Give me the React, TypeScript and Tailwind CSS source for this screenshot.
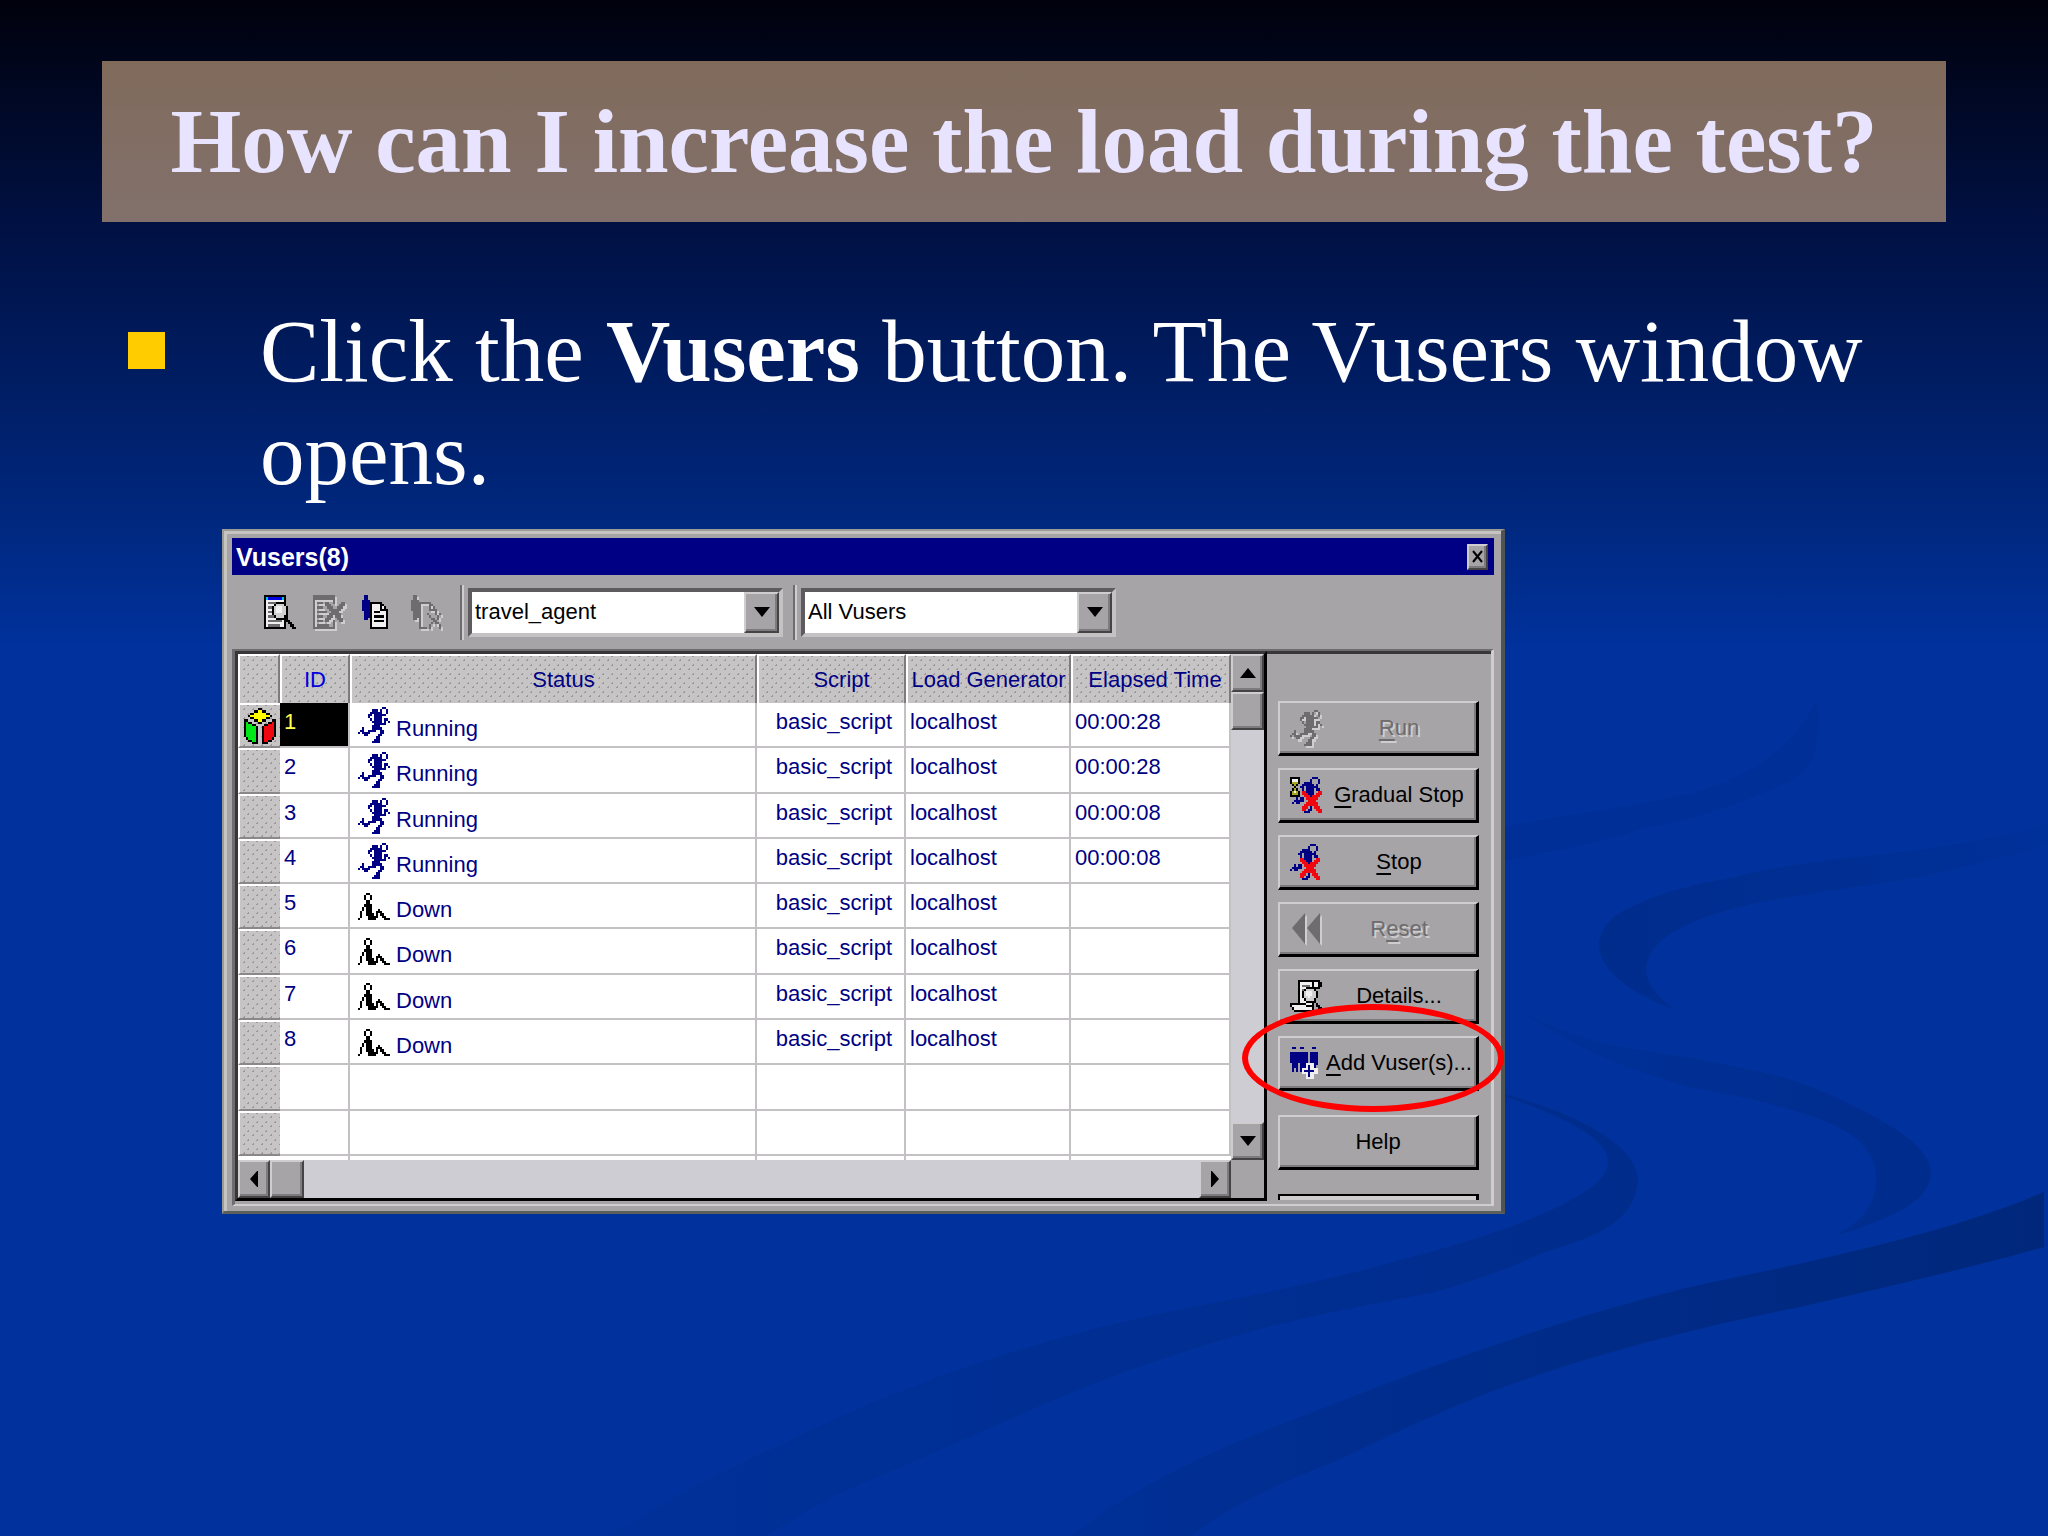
import type { ReactNode } from 'react';

const UI_FONT = "font-['Liberation_Sans',sans-serif] text-[22px] leading-[30px]";

const DOTS =
  'bg-[#c6c4c5] bg-[radial-gradient(circle,#9a9899_1px,transparent_1px),radial-gradient(circle,#9a9899_1px,transparent_1px)] bg-[size:9px_9px] bg-[position:0_0,4px_5px]';

const RAISED =
  'border-2 border-t-[#cfcdce] border-l-[#cfcdce] border-r-[#454344] border-b-[#454344] bg-[#a6a4a6] shadow-[inset_-2px_-2px_0_#7d7b7d]';

const PALETTE: Record<string, string> = {
  K: '#000000',
  W: '#f0f0f0',
  w: '#d0d0d0',
  g: '#6e6c6e',
  n: '#000084',
  b: '#0000e0',
  c: '#00c8e8',
  y: '#ffff00',
  o: '#a8a820',
  r: '#f00810',
  v: '#00e818',
};

const RUNNER = [
  '............nn..',
  '.......nnn.n..n.',
  '......nnnnnn..n.',
  '.....nn.nnnnnn..',
  '.....n..nnnn....',
  '......n.nnnn.nn.',
  '.......nnnnn.n.n',
  '........nnnnnn..',
  '.......nnnn.....',
  '..n....nnnnn....',
  '.nn..nnnn..nn...',
  'n.nnnn.....nn...',
  '...nn.....nn....',
  '.........nn.....',
  '........nnn.....',
  '.......nnnn.....',
];

const SITTING = [
  '....KK..........',
  '...K..K.........',
  '...K..K.........',
  '....KK..........',
  '....KK..........',
  '...KKKK.........',
  '..K.KKK.........',
  '..K.KKK...K.....',
  '.K..KKK..KKK....',
  '.K..KKKK.K.KK...',
  '.K...KKKKK..KK..',
  'K....KKKK....KKK',
];

const CUBE = [
  '.......KK.......',
  '.....KKyyKK.....',
  '...KKyyyyyyKK...',
  '..KyyyyyyyyyyK..',
  '...KKyyyyyyKK...',
  'KK...KKyyKK...KK',
  'KvKK...KK...KKrK',
  'KvvvKK....KKrrrK',
  'KvvvvvK..KrrrrrK',
  'KvvvvvK..KrrrrrK',
  'KvvvvvK..KrrrrrK',
  'KvvvvvK..KrrrrrK',
  'KvvvvvK..KrrrrrK',
  '.KvvvvK..KrrrrK.',
  '..KKvvK..KrrKK..',
  '....KKK..KKK....',
];

const FIND = [
  'KKKKKKKKKKK.....',
  'KcbbbbbbbcK.....',
  'KWWWWWWWWWK.....',
  'KWggggKKKKK.....',
  'KWWWWKwwwwK.....',
  'KWggKwWWWwwK....',
  'KWWWKwWWWwwK....',
  'KWggKwWWWwwK....',
  'KWWWKwwwwwwK....',
  'KWgggKwwwwKK....',
  'KWWWWWKKKKKK....',
  'KWgggggggWKKK...',
  'KWWWWWWWWWK.KK..',
  'KWggggggWWK..KK.',
  'KKKKKKKKKKK...KK',
];

const REMOVE = [
  'ggggggggggg.....',
  'ggggggggggg.....',
  'g.........g.....',
  'g.ggg.gg..g...gg',
  'g.....ggg....ggg',
  'g.ggg..ggg..ggg.',
  'g.......gggggg..',
  'g.ggggg..gggg...',
  'g.......gggggg..',
  'g.ggg..ggg.ggg..',
  'g.....ggg...ggg.',
  'g.ggg.gg..g..gg.',
  'g.........g.....',
  'g.gggggg..g.....',
  'ggggggggggg.....',
];

const USER_DOC = [
  '.nn.............',
  '.nn.............',
  'nnnn............',
  'nnnnKKKKKK......',
  'nnnnKWWWWKK.....',
  'nnnnKWWWWKWK....',
  'nnnnKWWWWKKKK...',
  '.nnnKWKKKWWWK...',
  '.nnnKWWWWWWWK...',
  '.nnnKWKKKKKWK...',
  '.nn.KWWWWWWWK...',
  '....KWKKKKKWK...',
  '....KWWWWWWWK...',
  '....KWWWWWWWK...',
  '....KKKKKKKKK...',
];

const USER_REMOVE = [
  '.gg.............',
  '.gg.............',
  'gggg............',
  'gggggggggg......',
  'ggggg....gg.....',
  'ggggg....g.g....',
  'ggggg....gggg...',
  '.gggg.......g...',
  '.gggg...g...g.g.',
  '.gggg....g...g..',
  '.gg.g.....gg.g..',
  '....g......gg...',
  '....g.....g.gg..',
  '....g....g....g.',
  '....gggg.g....g.',
];

const STOP = [
  '..........nnn...',
  '.........n...n..',
  '......nnnn...n..',
  '.....nnnnnn.n...',
  '....nn.nnnnnn...',
  '.....n.nnnn.nn..',
  '.....rrnnnn..rr.',
  '.....rrrnnn.rrr.',
  '......rrrnrrrr..',
  '..n.nn.rrrrrr...',
  '.nnnnn..rrrr....',
  'n.nn...rrrrrr...',
  '......rrrrrrr...',
  '.....rrr.n.rrr..',
  '.....rr.nn..rrr.',
  '......nnn....rr.',
];

const GRADUAL = [
  'KKKKK......nnn..',
  'KWWWK.....n...n.',
  'KoooK..nnnn...n.',
  '.KoK..nnnnnn.n..',
  '..K..nn.nnnnnn..',
  '.KoK..n.nnnn.nn.',
  'KoWoK.rrnnnn..rr',
  'KoooK.rrrnnn.rrr',
  'KKKKK..rrrnrrrr.',
  '...n.nn.rrrrrr..',
  '..nnnnn..rrrr...',
  '.n.nn...rrrrrr..',
  '.......rrrrrrr..',
  '......rrr.n.rrr.',
  '......rr.nn..rrr',
  '.......nnn....rr',
];

const DETAILS = [
  '....KKKKKKKKKKK.',
  '....KWWWWWWKWWKK',
  '....KWggggWKWWKK',
  '....KWWWKKKKKKK.',
  '....KWgKwwwwK...',
  '....KWKwWWWwwK..',
  '....KWKwWWWwwK..',
  '....KWKwwWwwwK..',
  '....KWWKwwwwK...',
  '....KWWWKKKKK...',
  'KKKKKKKKWWWK.K..',
  'KWWWWWWWKKKK.KK.',
  '.KWWWWWWWWWK..KK',
  '..KKKKKKKKKK...K',
];

const ADD_USERS = [
  '.nn..nn....nn...',
  '................',
  'nnnnnnnnn.nnnn..',
  'nnnnnnnnn.nnnn..',
  'nnnnnnnnn.nnnn..',
  'nnnnnnnnn.nnnn..',
  'nnnnnnnnn.nnnn..',
  '.nnn.nnnWWWWnn..',
  '.nnn.nnnWnWWn...',
  '.n.n.nWWWnWWWW..',
  '.n.n.nWnnnnnWW..',
  '......WWWnWWWW..',
  '........WnWW....',
  '........WWWW....',
];

// Draws an icon from rows of palette letters; a dot is a clear pixel.
const Bitmap = ({ rows, disabled = false }: { rows: string[]; disabled?: boolean }) => {
  const cols = rows[0].length;
  const cells = rows.flatMap((row, y) =>
    [...row].map((key, x) => ({ key, x, y })).filter((cell) => cell.key !== '.'),
  );
  return (
    <svg
      aria-hidden="true"
      className="shrink-0 overflow-visible"
      width={cols * 2}
      height={Math.round(rows.length * 2.25)}
      viewBox={`0 0 ${cols} ${rows.length}`}
      preserveAspectRatio="none"
      shapeRendering="crispEdges"
    >
      {disabled &&
        cells.map(({ x, y }) => (
          <rect key={`s${x}-${y}`} x={x + 1} y={y + 1} width={1} height={1} fill="#cfcdce" />
        ))}
      {cells.map(({ key, x, y }) => (
        <rect key={`${x}-${y}`} x={x} y={y} width={1} height={1} fill={disabled ? PALETTE.g : PALETTE[key]} />
      ))}
    </svg>
  );
};

const Rewind = () => (
  <svg aria-hidden="true" className="shrink-0" width="32" height="34" viewBox="0 0 32 34">
    <path d="M17 3V34L4 18ZM32 3V34L19 18Z" fill="#cfcdce" />
    <path d="M15 1V32L2 16ZM30 1V32L17 16Z" fill="#6e6c6e" />
  </svg>
);

const Arrow = ({ d }: { d: string }) => (
  <svg aria-hidden="true" width="16" height="16" viewBox="0 0 16 16">
    <path d={d} fill="#000" />
  </svg>
);

const UP = 'M8 3L16 13H0Z';
const DOWN = 'M8 13L16 3H0Z';
const LEFT = 'M4 8L12 -1V17Z';
const RIGHT = 'M12 8L4 -1V17Z';

const vusers = [
  { id: 1, status: 'Running', elapsed: '00:00:28' },
  { id: 2, status: 'Running', elapsed: '00:00:28' },
  { id: 3, status: 'Running', elapsed: '00:00:08' },
  { id: 4, status: 'Running', elapsed: '00:00:08' },
  { id: 5, status: 'Down', elapsed: '' },
  { id: 6, status: 'Down', elapsed: '' },
  { id: 7, status: 'Down', elapsed: '' },
  { id: 8, status: 'Down', elapsed: '' },
];

const Swirls = () => (
  <svg
    aria-hidden="true"
    className="absolute inset-0 h-full w-full"
    viewBox="0 0 2048 1536"
    preserveAspectRatio="none"
  >
    <defs>
      <linearGradient id="road" x1="0" x2="1" y1="0" y2="0">
        <stop offset="0" stopColor="#001e5a" stopOpacity="0.08" />
        <stop offset="1" stopColor="#001e5a" stopOpacity="0.5" />
      </linearGradient>
      <linearGradient id="bend" x1="0" x2="1" y1="0" y2="0">
        <stop offset="0" stopColor="#001e5a" stopOpacity="0.05" />
        <stop offset="1" stopColor="#001e5a" stopOpacity="0.24" />
      </linearGradient>
      <linearGradient id="far" x1="0" x2="1" y1="0" y2="0">
        <stop offset="0" stopColor="#001e5a" stopOpacity="0.24" />
        <stop offset="1" stopColor="#001e5a" stopOpacity="0.04" />
      </linearGradient>
    </defs>
    <path
      d="M2044 1192C1960 1228 1850 1254 1708 1283C1600 1308 1520 1336 1431 1367C1370 1389 1320 1410 1274 1427C1200 1456 1130 1490 1071 1536H1191C1230 1505 1280 1482 1339 1460C1400 1430 1460 1402 1523 1380C1610 1350 1700 1327 1800 1307C1890 1286 1970 1268 2044 1247Z"
      fill="url(#road)"
    />
    <path
      d="M1480 1088C1560 1106 1636 1140 1638 1179C1636 1220 1600 1236 1545 1252C1500 1272 1470 1282 1431 1293C1360 1306 1300 1318 1246 1333C1150 1360 1080 1388 1015 1417C940 1450 880 1476 831 1497L766 1536H610C660 1504 720 1472 785 1443C850 1410 920 1382 997 1357C1080 1330 1160 1312 1246 1297C1310 1283 1360 1272 1400 1260C1470 1242 1530 1222 1565 1203C1600 1186 1612 1170 1607 1155C1600 1134 1550 1110 1480 1088Z"
      fill="url(#bend)"
    />
    <path
      d="M2048 824C1990 840 1920 852 1855 857C1810 862 1770 868 1731 878C1680 886 1640 900 1615 916C1598 930 1598 945 1600 952C1606 975 1635 995 1673 1009C1650 990 1640 975 1650 955C1664 928 1710 914 1751 904C1800 894 1850 888 1896 881C1950 872 2000 858 2048 845Z"
      fill="url(#far)"
    />
    <path
      d="M1512 1006C1550 1028 1590 1042 1627 1048C1660 1054 1700 1058 1731 1066C1780 1074 1820 1088 1855 1107C1900 1128 1930 1150 1931 1173C1930 1200 1896 1218 1834 1236C1866 1220 1880 1200 1875 1167C1870 1150 1860 1138 1834 1125C1790 1106 1740 1096 1689 1087C1640 1072 1590 1058 1512 1006Z"
      fill="url(#bend)"
    />
    <path
      d="M1505 827C1570 814 1630 808 1689 794C1740 780 1790 755 1817 701C1822 740 1815 765 1793 779C1750 800 1700 818 1648 827C1600 842 1560 850 1505 860Z"
      fill="#001e5a"
      fillOpacity="0.07"
    />
  </svg>
);

const ComboBox = ({ label, value }: { label: string; value: string }) => (
  <div className="flex h-[49px] w-[315px] border-4 border-t-[#5d5b5d] border-l-[#5d5b5d] border-r-[#c4c2c3] border-b-[#c4c2c3] bg-white">
    <select
      aria-label={label}
      defaultValue={value}
      className="h-full min-w-0 flex-1 appearance-none bg-white pl-[3px] text-black outline-none"
    >
      <option>{value}</option>
    </select>
    <span className={`flex w-[35px] items-center justify-center ${RAISED}`}>
      <Arrow d={DOWN} />
    </span>
  </div>
);

const ToolSeparator = () => <div className="h-[55px] w-1 border-r-2 border-l-2 border-r-[#cfcdce] border-l-[#6e6c6e]" />;

const SideButton = ({ icon, disabled = false, children }: { icon?: ReactNode; disabled?: boolean; children: ReactNode }) => (
  <button
    type="button"
    disabled={disabled}
    className={`flex h-[55px] w-full items-center border-t-2 border-r-[3px] border-b-[3px] border-l-2 border-t-[#cfcdce] border-r-black border-b-black border-l-[#cfcdce] bg-[#a6a4a6] shadow-[inset_-2px_-2px_0_#7d7b7d] ${
      icon ? 'pl-[10px]' : ''
    } ${disabled ? 'text-[#6e6c6e] [text-shadow:2px_2px_0_#cfcdce]' : 'text-black'}`}
  >
    {icon}
    <span className="flex-1 text-center whitespace-nowrap">{children}</span>
  </button>
);

const Key = ({ children }: { children: string }) => (
  <span className="underline decoration-2 underline-offset-4">{children}</span>
);

const VuserTable = () => {
  const head = `border-t-2 border-r-2 border-l-2 border-t-white border-r-[#7d7b7d] border-l-white p-0 font-normal ${DOTS}`;
  const cell = 'h-[45px] border-r-2 border-b-2 border-[#c3c1c3] p-0 align-top whitespace-nowrap';
  const gutter = `h-[45px] border-t-2 border-b-2 border-l-2 border-t-white border-l-white border-b-[#8a888a] p-0 ${DOTS}`;
  return (
    <table className="h-[506px] w-full table-fixed border-separate border-spacing-0 bg-white text-[#000084]">
      <colgroup>
        <col className="w-[42px]" />
        <col className="w-[70px]" />
        <col />
        <col className="w-[149px]" />
        <col className="w-[165px]" />
        <col className="w-[160px]" />
      </colgroup>
      <thead>
        <tr className="h-[49px]">
          <th className={head} aria-label="Marker" />
          <th className={`${head} text-[#0000e0]`}>ID</th>
          <th className={`${head} pl-5`}>Status</th>
          <th className={`${head} pl-5`}>Script</th>
          <th className={`${head} whitespace-nowrap`}>Load Generator</th>
          <th className={`${head} border-r-0 pl-2 whitespace-nowrap`}>Elapsed Time</th>
        </tr>
      </thead>
      <tbody>
        {vusers.map(({ id, status, elapsed }) => (
          <tr key={id}>
            <td className={gutter}>
              {id === 1 && (
                <div className="flex justify-center">
                  <Bitmap rows={CUBE} />
                </div>
              )}
            </td>
            <td className={`${cell} pt-1 pl-1 ${id === 1 ? 'bg-black text-[#ffff50]' : ''}`}>{id}</td>
            <td className={`${cell} pt-[3px] pl-2`}>
              <div className="flex items-center gap-[6px]">
                <Bitmap rows={status === 'Running' ? RUNNER : SITTING} />
                <span className="pt-2">{status}</span>
              </div>
            </td>
            <td className={`${cell} pt-1 pr-3 text-right`}>basic_script</td>
            <td className={`${cell} pt-1 pl-1`}>localhost</td>
            <td className={`${cell} border-r-0 pt-1 pl-1`}>{elapsed}</td>
          </tr>
        ))}
        {[9, 10].map((row) => (
          <tr key={row}>
            <td className={gutter} />
            <td className={cell} />
            <td className={cell} />
            <td className={cell} />
            <td className={cell} />
            <td className={`${cell} border-r-0`} />
          </tr>
        ))}
        <tr className="h-1">
          <td className="p-0" />
          <td className="border-r-2 border-[#c3c1c3] p-0" />
          <td className="border-r-2 border-[#c3c1c3] p-0" />
          <td className="border-r-2 border-[#c3c1c3] p-0" />
          <td className="border-r-2 border-[#c3c1c3] p-0" />
          <td className="p-0" />
        </tr>
      </tbody>
    </table>
  );
};

const VusersWindow = () => (
  <section
    className={`ml-[222px] w-full max-w-[1283px] border-t-2 border-r-4 border-b-[3px] border-l-2 border-t-[#9a9a96] border-r-[#505452] border-b-[#5c605a] border-l-[#9a9a96] bg-[#a6a4a6] pt-[7px] pr-[7px] pb-[5px] pl-2 shadow-[inset_3px_3px_0_#c6c4c0] ${UI_FONT}`}
  >
    <div className="flex h-[37px] items-center bg-[#000084] pr-[6px] pl-1">
      <h2 className="flex-1 text-[25px] font-bold text-white">Vusers(8)</h2>
      <button type="button" aria-label="Close" className={`flex h-[26px] w-[21px] items-center justify-center ${RAISED}`}>
        <svg aria-hidden="true" width="11" height="13" viewBox="0 0 11 13">
          <path d="M1 1L10 12M10 1L1 12" stroke="#000" strokeWidth="2" />
        </svg>
      </button>
    </div>

    <div className="flex h-[74px] items-center pl-8">
      <div className="flex gap-[17px] pr-[17px]">
        <button type="button" aria-label="Vuser details">
          <Bitmap rows={FIND} />
        </button>
        <button type="button" aria-label="Remove Vuser" disabled>
          <Bitmap rows={REMOVE} disabled />
        </button>
        <button type="button" aria-label="Vuser log">
          <Bitmap rows={USER_DOC} />
        </button>
        <button type="button" aria-label="Close Vuser log" disabled>
          <Bitmap rows={USER_REMOVE} disabled />
        </button>
      </div>
      <div className="flex items-center gap-1">
        <ToolSeparator />
        <ComboBox label="Group" value="travel_agent" />
        <span className="w-[2px]" />
        <ToolSeparator />
        <ComboBox label="Filter" value="All Vusers" />
      </div>
    </div>

    <div className="flex border-t-2 border-r-[3px] border-b-2 border-l-[3px] border-t-[#6e6c6e] border-r-[#cfcdce] border-b-[#cfcdce] border-l-[#6e6c6e] pb-[3px]">
      <div className="flex min-w-0 flex-1 border-[3px] border-t-[#383638] border-r-black border-b-black border-l-[#383638]">
        <div className="flex min-w-0 flex-1 flex-col">
          <VuserTable />
          <div className="flex h-[38px] bg-[#cfcdd4]">
            <button type="button" aria-label="Scroll left" className={`flex w-8 items-center justify-center ${RAISED}`}>
              <Arrow d={LEFT} />
            </button>
            <div className={`w-[34px] ${RAISED}`} />
            <button type="button" aria-label="Scroll right" className={`ml-auto flex w-8 items-center justify-center ${RAISED}`}>
              <Arrow d={RIGHT} />
            </button>
          </div>
        </div>
        <div className="flex w-[33px] flex-col bg-[#cfcdd4]">
          <button type="button" aria-label="Scroll up" className={`flex h-[38px] items-center justify-center ${RAISED}`}>
            <Arrow d={UP} />
          </button>
          <div className={`h-[38px] ${RAISED}`} />
          <button type="button" aria-label="Scroll down" className={`mt-auto flex h-[38px] items-center justify-center ${RAISED}`}>
            <Arrow d={DOWN} />
          </button>
          <div className="h-[38px] bg-[#a6a4a6]" />
        </div>
      </div>

      <div className="w-[224px] border-t-[3px] border-[#383638]">
        <div className="flex flex-col gap-3 pt-[47px] pr-3 pl-[11px]">
          <SideButton icon={<Bitmap rows={RUNNER} disabled />} disabled>
            <Key>R</Key>un
          </SideButton>
          <SideButton icon={<Bitmap rows={GRADUAL} />}>
            <Key>G</Key>radual Stop
          </SideButton>
          <SideButton icon={<Bitmap rows={STOP} />}>
            <Key>S</Key>top
          </SideButton>
          <SideButton icon={<Rewind />} disabled>
            R<Key>e</Key>set
          </SideButton>
          <SideButton icon={<Bitmap rows={DETAILS} />}>Details...</SideButton>
          <div className="relative">
            <SideButton icon={<Bitmap rows={ADD_USERS} />}>
              <Key>A</Key>dd Vuser(s)...
            </SideButton>
            <div className="pointer-events-none absolute -top-8 -left-9 h-[108px] w-[262px] rounded-[50%] border-[6px] border-[#ff0000]" />
          </div>
          <div className="pt-3">
            <SideButton>Help</SideButton>
          </div>
          <div className="mt-3 h-[6px] border-t-2 border-r-[3px] border-l-2 border-black bg-[#cfcdce]" />
        </div>
      </div>
    </div>
  </section>
);

const App = () => {
  return (
    <main className="relative min-h-screen overflow-hidden bg-[#00319c] bg-[linear-gradient(#00010c_0%,#001144_15%,#00287f_34%,#00319c_42%)] pt-[61px] font-['Liberation_Serif',serif]">
      <Swirls />
      <div className="relative">
        <h1 className="mx-[5%] flex h-[161px] items-center justify-center bg-linear-to-b from-[#806b5b] to-[#82706c] text-[91px] leading-[100px] font-bold text-[#e8e4ff]">
          How can I increase the load during the test?
        </h1>
        <ul className="mr-[5%] ml-32 pt-[78px]">
          <li className="flex gap-[95px]">
            <span className="mt-8 h-[37px] w-[37px] shrink-0 bg-[#ffcc00]" />
            <p className="text-[89px] leading-[103px] text-white">
              Click the <b>Vusers</b> button. The Vusers window opens.
            </p>
          </li>
        </ul>
        <div className="pt-[23px]">
          <VusersWindow />
        </div>
      </div>
    </main>
  );
};

export default App;
